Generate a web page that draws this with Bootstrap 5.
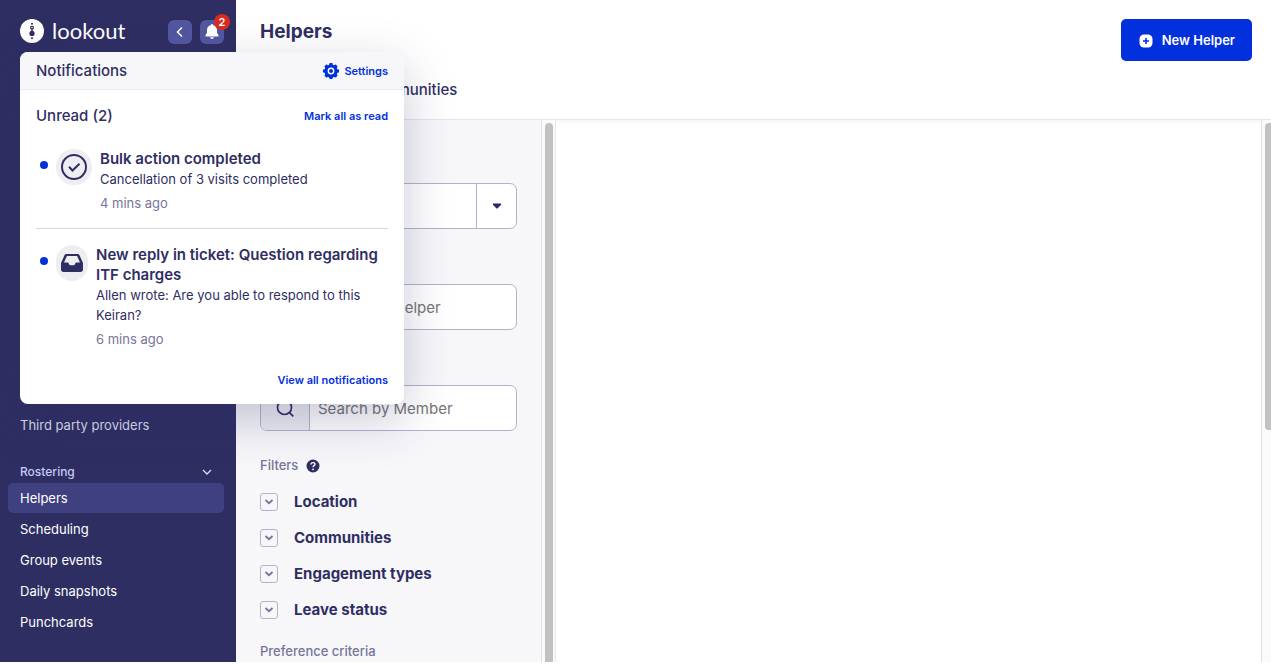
<!DOCTYPE html>
<html lang="en">
<head>
<meta charset="utf-8">
<meta name="viewport" content="width=device-width, initial-scale=1">
<title>Helpers</title>
<link href="https://cdn.jsdelivr.net/npm/bootstrap@5.3.0/dist/css/bootstrap.min.css" rel="stylesheet">
<style>
:root { --ink: #2f2e63; --muted: #76759b; --line: #b3b2cb; --brand: #0230dc; --panel: #f7f7fa; }
body { font-family: Inter, "Liberation Sans", sans-serif; font-size: 15px; line-height: 20px; color: var(--ink); }
svg { display: block; flex: none; }
.side { width: 236px; background: var(--ink); }
.side-head { height: 63px; padding: 18px 12px 0 20px; }
.wordmark { font: 400 22px/24px Lato, sans-serif; color: #fff; }
.sq-btn { width: 24px; height: 24px; margin-top: 2px; border-radius: 6px; background: #5257a0; color: #fff; }
.count { top: -6px; left: 14px; width: 16px; height: 16px; border-radius: 50%; background: #d92c20; font-size: 11px; line-height: 16px; font-weight: 600; }
.side-nav { margin-top: 347px; padding: 0 12px 0 8px; font-size: 13px; }
.side-nav .nav-link { color: #fff; padding: 5px 12px; border-radius: 5px; margin-bottom: 1px; }
.side-nav .nav-link.active { background: #3f407f; }
.side-nav .nav-link.quiet { color: #dcdcec; margin-bottom: 22px; }
.group-btn { color: #c6c9f5; font-size: 12px; font-weight: 500; padding: 0 12px; height: 20px; margin: 0 0 1px; }
.top-bar { height: 120px; border-bottom: 1px solid #e4e4ea; padding: 19px 19px 0 24px; }
.page-title { font-size: 19px; line-height: 26px; font-weight: 700; }
.tabs { padding: 19px 0 0 103px; font-weight: 500; }
.tabs a, .pop a { text-decoration: none; }
.tabs a { color: var(--ink); }
.new-btn { height: 42px; padding: 1px 17px 0; gap: 8px; border-radius: 5px; background: var(--brand); color: #fff; font-size: 13px; font-weight: 600; }
.new-btn:hover { background: #0128b8; color: #fff; }
.filters { width: 306px; background: var(--panel); border-right: 1px solid #e0e0e4; padding: 63px 24px 0; }
.field { height: 46px; border: 1px solid var(--line); border-radius: 7px; background: #fff; overflow: hidden; }
.field input { color: var(--ink); font-size: 15px; padding: 2px 8px 0; }
.field input::placeholder { color: #757575; opacity: 1; }
.field-icon { width: 49px; background: #ededf3; border-right: 1px solid var(--line); }
.field-drop { width: 40px; border-left: 1px solid var(--line); }
.gap-field { margin-top: 55px; }
.label-text { font-size: 13px; color: var(--muted); font-weight: 500; }
.filters-label { margin: 24px 0 9px; }
.prefs-label { margin-top: 13px; }
.filter-row { height: 36px; gap: 16px; font-weight: 700; }
.tick { width: 18px; height: 18px; border: 1px solid var(--line); border-radius: 3px; color: var(--muted); background: var(--panel); }
.track { width: 14px; background: #fafafa; border-right: 1px solid #e8e8e8; padding: 3px 2px 0 3px; }
.thumb-bar { width: 8px; background: #c1c1c1; border-radius: 4px 4px 0 0; }
.track-end { width: 10px; background: #fafafa; border-left: 1px solid #e2e2e2; padding: 3px 0 0 3px; }
.thumb-end { height: 57%; background: #c1c1c1; border-radius: 4px 0 0 4px; }
.canvas-area { box-shadow: inset 0 5px 5px -4px #f0f0f3; }
.pop { top: 52px; left: 20px; width: 384px; background: #fff; border-radius: 8px; box-shadow: 0 16px 48px rgba(47,46,99,.26); overflow: hidden; }
.pop-wrap { z-index: 10; }
.pop-head { height: 38px; padding: 0 16px; background: var(--panel); border-bottom: 1px solid #e9e9ee; }
.pop-title { font-size: 15px; line-height: 20px; font-weight: 500; }
.note .pop-title { font-weight: 600; }
.pop a { font-size: 11px; font-weight: 600; color: var(--brand); }
.unread-row { padding: 16px 0; margin-bottom: 7px; }
.pop-foot { padding: 5px 0 14px; }
.note { padding: 0 0 15px 4px; gap: 8px; font-size: 13px; }
.note + .note { border-top: 1px solid #d6d6e2; padding-top: 16px; }
.dot { width: 8px; height: 8px; border-radius: 50%; background: var(--brand); margin-top: 12px; }
.note-icon { width: 36px; height: 36px; border-radius: 18px; background: #ededf2; flex: none; }
.note-icon.narrow { width: 32px; }
</style>
</head>
<body class="m-0">
<div class="vh-100 pb-1 d-flex overflow-hidden">
  <aside class="side flex-shrink-0 position-relative pop-wrap">
    <div class="side-head d-flex align-items-start">
      <a href="#" class="d-flex align-items-center text-decoration-none" aria-label="lookout">
        <svg width="24" height="26" viewBox="0 0 24 26"><circle cx="12" cy="13" r="12" fill="#fff"/><g fill="#2f2e63"><circle cx="12" cy="5.800" r="1"/><circle cx="12" cy="9.800" r="2"/><circle cx="12" cy="15.400" r="2.600"/><rect x="11.300" y="9" width="1.400" height="8"/><circle cx="12" cy="20.300" r="1"/></g><circle cx="12" cy="9.800" r=".8" fill="#fff"/></svg>
        <span class="wordmark ms-1 ps-1">lookout</span>
      </a>
      <button type="button" class="sq-btn btn p-0 ms-auto d-flex align-items-center justify-content-center border-0" aria-label="Collapse menu">
        <svg width="24" height="24" viewBox="0 0 24 24" fill="none" stroke="#fff" stroke-width="1.500"><path d="M14 7.500 9.500 12l4.500 4.500"/></svg>
      </button>
      <button type="button" class="sq-btn btn p-0 ms-2 border-0 position-relative" aria-label="Notifications">
        <svg width="24" height="24" viewBox="0 0 24 24" fill="#fff"><path d="M12 4c.7 0 1 .5 1 1.100 2.500.5 4 2.400 4 5v2.700l1.500 2.200V16.500h-13V15L7 12.800v-2.700c0-2.600 1.500-4.500 4-5C11 4.500 11.300 4 12 4zM10 17.300h4c-.2 1-1 1.700-2 1.700s-1.800-.7-2-1.700z"/></svg>
        <span class="count position-absolute text-white text-center">2</span>
      </button>
    </div>
    <section class="pop position-absolute" aria-label="Notifications">
      <div class="pop-head d-flex align-items-center justify-content-between">
        <h2 class="pop-title m-0">Notifications</h2>
        <a href="#" class="d-flex align-items-center gap-1">
          <svg width="18" height="18" viewBox="0 0 18 18"><g fill="#0230dc"><circle cx="9" cy="9" r="6.600"/><g id="teeth"><rect x="7.200" y="1" width="3.600" height="16" rx="1"/><rect x="1" y="7.200" width="16" height="3.600" rx="1"/></g><use href="#teeth" transform="rotate(45 9 9)"/></g><circle cx="9" cy="9" r="2.700" fill="none" stroke="#fff" stroke-width="1.400"/></svg>
          Settings</a>
      </div>
      <div class="px-3">
        <div class="unread-row d-flex align-items-center justify-content-between">
          <h3 class="pop-title m-0">Unread (2)</h3>
          <a href="#">Mark all as read</a>
        </div>
        <article class="note d-flex align-items-start">
          <span class="dot flex-shrink-0"></span>
          <span class="note-icon d-flex align-items-center justify-content-center">
            <svg width="28" height="28" viewBox="0 0 28 28" fill="none" stroke="#2f2e63" stroke-width="2"><circle cx="14" cy="14" r="12"/><path d="m9 13.800 3.500 3.700 7-6.800"/></svg>
          </span>
          <div>
            <h4 class="pop-title m-0">Bulk action completed</h4>
            <p class="m-0">Cancellation of 3 visits completed</p>
            <p class="label-text fw-normal m-0 mt-1">4 mins ago</p>
          </div>
        </article>
        <article class="note d-flex align-items-start">
          <span class="dot flex-shrink-0"></span>
          <span class="note-icon narrow d-flex align-items-center justify-content-center">
            <svg width="24" height="20" viewBox="0 0 24 20"><path fill="#2f2e63" fill-rule="evenodd" d="M6.500 1h11c1 0 1.600.4 2 1.200L23 10v6.500c0 1.500-1 2.500-2.500 2.500h-17C2 19 1 18 1 16.500V10l3.500-7.800C4.900 1.400 5.500 1 6.500 1zm.4 2L4 9.500h4.200l1 2c.3.500.7.700 1.200.7h3.200c.5 0 .9-.2 1.200-.7l1-2H20L17.100 3z"/></svg>
          </span>
          <div>
            <h4 class="pop-title m-0">New reply in ticket: Question regarding ITF charges</h4>
            <p class="m-0">Allen wrote: Are you able to respond to this Keiran?</p>
            <p class="label-text fw-normal m-0 mt-1">6 mins ago</p>
          </div>
        </article>
        <div class="pop-foot text-end"><a href="#">View all notifications</a></div>
      </div>
    </section>
    <nav class="side-nav nav flex-column flex-nowrap" aria-label="Main">
      <a class="nav-link quiet" href="#">Third party providers</a>
      <button type="button" class="group-btn btn border-0 d-flex align-items-center justify-content-between">Rostering
        <svg width="10" height="8" viewBox="0 0 10 8" fill="none" stroke="#dcdcf5" stroke-width="1.300"><path d="m1 2 4 4 4-4"/></svg>
      </button>
      <a class="nav-link active" aria-current="page" href="#">Helpers</a>
      <a class="nav-link" href="#">Scheduling</a>
      <a class="nav-link" href="#">Group events</a>
      <a class="nav-link" href="#">Daily snapshots</a>
      <a class="nav-link" href="#">Punchcards</a>
    </nav>
  </aside>
  <div class="flex-grow-1 d-flex flex-column overflow-hidden">
    <header class="top-bar d-flex justify-content-between align-items-start flex-shrink-0">
      <div>
        <h1 class="page-title m-0">Helpers</h1>
        <nav class="tabs mt-3" aria-label="Sections"><a href="#">Communities</a></nav>
      </div>
      <button type="button" class="new-btn btn border-0 d-flex align-items-center">
        <svg width="16" height="16" viewBox="0 0 16 16"><rect x="1.500" y="1.500" width="13" height="13" rx="4.500" fill="#fff"/><path d="M8 5v6M5 8h6" stroke="#0230dc" stroke-width="1.600"/></svg>
        New Helper
      </button>
    </header>
    <div class="flex-grow-1 d-flex overflow-hidden">
      <form class="filters flex-shrink-0 overflow-hidden">
        <div class="field d-flex">
          <input type="text" class="border-0 bg-transparent flex-grow-1 w-100" aria-label="Saved view">
          <button type="button" class="field-drop btn rounded-0 border-top-0 border-end-0 border-bottom-0 p-0 flex-shrink-0 d-flex align-items-center justify-content-center" aria-label="Open list">
            <svg width="10" height="6" viewBox="0 0 10 6"><path fill="#2a2a6b" d="M1 .5h8c.4.500.3 1-.2 1.500L5.700 5.200c-.5.400-.9.400-1.400 0L1.200 2C.7 1.500.6 1 1 .5z"/></svg>
          </button>
        </div>
        <div class="field gap-field d-flex">
          <span class="field-icon flex-shrink-0"></span>
          <input type="search" class="border-0 bg-transparent flex-grow-1 w-100" placeholder="Search by Helper" aria-label="Search by Helper">
        </div>
        <div class="field gap-field d-flex">
          <span class="field-icon flex-shrink-0 d-flex align-items-center justify-content-center">
            <svg width="18" height="18" viewBox="0 0 18 18" fill="none" stroke="#2f2e63" stroke-width="1.700"><circle cx="8.500" cy="8.500" r="7"/><path d="m13.300 13.300 4 4"/></svg>
          </span>
          <input type="search" class="border-0 bg-transparent flex-grow-1 w-100" placeholder="Search by Member" aria-label="Search by Member">
        </div>
        <div class="label-text filters-label d-flex gap-1">Filters
          <svg class="mt-1 ms-1" width="14" height="14" viewBox="0 0 14 14"><circle cx="7" cy="7" r="6.500" fill="#2f2e63"/><path d="M5 5.500c0-2.700 4-2.500 4-.2C9 6.700 7 6.600 7 8.300" fill="none" stroke="#fff" stroke-width="1.300"/><circle cx="7" cy="10.300" r=".9" fill="#fff"/></svg>
        </div>
        <div class="filter-row d-flex align-items-center"><button type="button" class="tick btn p-0 d-flex align-items-center justify-content-center" aria-label="Expand Location"><svg width="10" height="8" viewBox="0 0 10 8" fill="none" stroke="#76759b" stroke-width="1.800"><path d="m1.500 2 3.500 3.200L8.500 2"/></svg></button><span>Location</span></div>
        <div class="filter-row d-flex align-items-center"><button type="button" class="tick btn p-0 d-flex align-items-center justify-content-center" aria-label="Expand Communities"><svg width="10" height="8" viewBox="0 0 10 8" fill="none" stroke="#76759b" stroke-width="1.800"><path d="m1.500 2 3.500 3.200L8.500 2"/></svg></button><span>Communities</span></div>
        <div class="filter-row d-flex align-items-center"><button type="button" class="tick btn p-0 d-flex align-items-center justify-content-center" aria-label="Expand Engagement types"><svg width="10" height="8" viewBox="0 0 10 8" fill="none" stroke="#76759b" stroke-width="1.800"><path d="m1.500 2 3.500 3.200L8.500 2"/></svg></button><span>Engagement types</span></div>
        <div class="filter-row d-flex align-items-center"><button type="button" class="tick btn p-0 d-flex align-items-center justify-content-center" aria-label="Expand Leave status"><svg width="10" height="8" viewBox="0 0 10 8" fill="none" stroke="#76759b" stroke-width="1.800"><path d="m1.500 2 3.500 3.200L8.500 2"/></svg></button><span>Leave status</span></div>
        <div class="label-text prefs-label">Preference criteria</div>
      </form>
      <div class="track flex-shrink-0" aria-hidden="true"><div class="thumb-bar h-100"></div></div>
      <main class="canvas-area flex-grow-1"></main>
      <div class="track-end flex-shrink-0" aria-hidden="true"><div class="thumb-end"></div></div>
    </div>
  </div>
</div>
<script src="https://cdn.jsdelivr.net/npm/bootstrap@5.3.0/dist/js/bootstrap.bundle.min.js"></script>
</body>
</html>
